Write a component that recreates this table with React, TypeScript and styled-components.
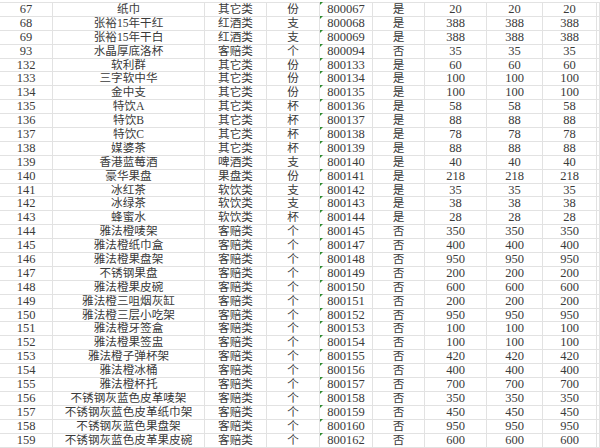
import React from 'react';
import styled, {createGlobalStyle} from "styled-components";

type RowType = [string, string, string, string, string, string, string]

const rows: Array<RowType> = [
    ['67', '纸巾', '其它类', '份', '800067', '是', '20'],
    ['68', '张裕15年干红', '红酒类', '支', '800068', '是', '388'],
    ['69', '张裕15年干白', '红酒类', '支', '800069', '是', '388'],
    ['93', '水晶厚底洛杯', '客赔类', '个', '800094', '否', '35'],
    ['132', '软利群', '其它类', '份', '800133', '是', '60'],
    ['133', '三字软中华', '其它类', '份', '800134', '是', '100'],
    ['134', '金中支', '其它类', '份', '800135', '是', '100'],
    ['135', '特饮A', '其它类', '杯', '800136', '是', '58'],
    ['136', '特饮B', '其它类', '杯', '800137', '是', '88'],
    ['137', '特饮C', '其它类', '杯', '800138', '是', '78'],
    ['138', '媒婆茶', '其它类', '杯', '800139', '是', '88'],
    ['139', '香港蓝莓酒', '啤酒类', '支', '800140', '是', '40'],
    ['140', '豪华果盘', '果盘类', '份', '800141', '是', '218'],
    ['141', '冰红茶', '软饮类', '支', '800142', '是', '35'],
    ['142', '冰绿茶', '软饮类', '支', '800143', '是', '38'],
    ['143', '蜂蜜水', '软饮类', '杯', '800144', '是', '28'],
    ['144', '雅法橙唛架', '客赔类', '个', '800145', '否', '350'],
    ['145', '雅法橙纸巾盒', '客赔类', '个', '800147', '否', '400'],
    ['146', '雅法橙果盘架', '客赔类', '个', '800148', '否', '950'],
    ['147', '不锈钢果盘', '客赔类', '个', '800149', '否', '200'],
    ['148', '雅法橙果皮碗', '客赔类', '个', '800150', '否', '600'],
    ['149', '雅法橙三咀烟灰缸', '客赔类', '个', '800151', '否', '200'],
    ['150', '雅法橙三层小吃架', '客赔类', '个', '800152', '否', '950'],
    ['151', '雅法橙牙签盒', '客赔类', '个', '800153', '否', '100'],
    ['152', '雅法橙果签盅', '客赔类', '个', '800154', '否', '100'],
    ['153', '雅法橙子弹杯架', '客赔类', '个', '800155', '否', '420'],
    ['154', '雅法橙冰桶', '客赔类', '个', '800156', '否', '400'],
    ['155', '雅法橙杯托', '客赔类', '个', '800157', '否', '700'],
    ['156', '不锈钢灰蓝色皮革唛架', '客赔类', '个', '800158', '否', '350'],
    ['157', '不锈钢灰蓝色皮革纸巾架', '客赔类', '个', '800159', '否', '450'],
    ['158', '不锈钢灰蓝色果盘架', '客赔类', '个', '800160', '否', '950'],
    ['159', '不锈钢灰蓝色皮革果皮碗', '客赔类', '个', '800162', '否', '600'],
]

const App = () => {
    return (
        <>
            <GlobalStyle/>
            <Sheet>
                {rows.map((r) => {
                    const [id, name, kind, unit, code, flag, price] = r
                    return (
                        <Row key={id}>
                            <Cell>{id}</Cell>
                            <Cell cjk>{name}</Cell>
                            <Cell cjk>{kind}</Cell>
                            <Cell cjk>{unit}</Cell>
                            <Cell marked>{code}</Cell>
                            <Cell cjk>{flag}</Cell>
                            <Cell>{price}</Cell>
                            <Cell>{price}</Cell>
                            <Cell>{price}</Cell>
                            <Cell/>
                        </Row>
                    )
                })}
            </Sheet>
        </>
    );
};

export default App

const GlobalStyle = createGlobalStyle`
  html, body {
    margin: 0;
    padding: 0;
    background: #ffffff;
    overflow: hidden;
  }
`

const Sheet = styled.div`
  width: 600px;
  height: 448px;
  overflow: hidden;
  padding-top: 2px;
  box-sizing: border-box;
  background: #ffffff;
  font-family: "Liberation Serif", "Noto Sans CJK SC", serif;
  color: #3a3a3a;
`

const Row = styled.div`
  display: grid;
  grid-template-columns: 53px 152px 62px 53px 53px 52px 62px 56px 54px 1fr;
  height: 13.9px;
  border-top: 1px solid #e2e2e2;
  margin-top: -1px;
  &:first-child {
    margin-top: 0;
  }
`

const Cell = styled.div<{ cjk?: boolean, marked?: boolean }>`
  position: relative;
  box-sizing: border-box;
  border-right: 1px solid #e2e2e2;
  border-bottom: 1px solid #e2e2e2;
  height: 14.9px;
  margin-top: -1px;
  padding-top: 1px;
  text-align: center;
  white-space: nowrap;
  overflow: hidden;
  font-size: ${props => props.cjk ? '11.6px' : '12.5px'};
  line-height: 13px;
  &::before {
    content: '';
    display: ${props => props.marked ? 'block' : 'none'};
    position: absolute;
    left: 0;
    top: 0;
    width: 0;
    height: 0;
    border-top: 3px solid #2e8b2e;
    border-right: 3px solid transparent;
  }
`
